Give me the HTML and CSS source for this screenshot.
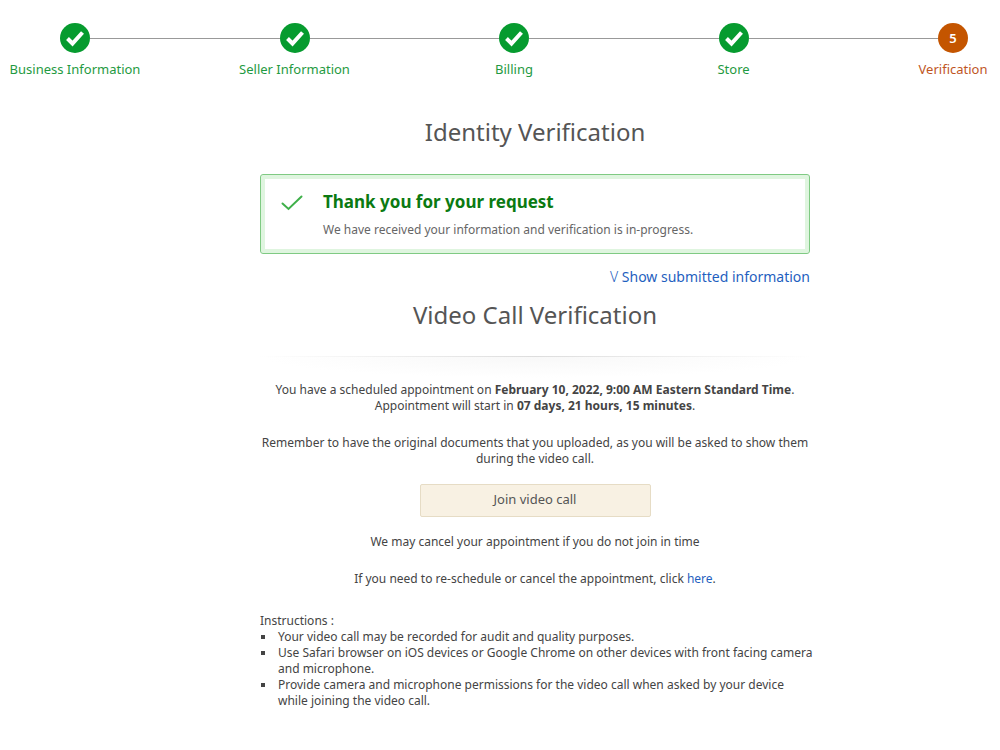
FILE: index.html
```html
<!DOCTYPE html>
<html lang="en">

<head>
    <title>Identity Verification</title>
    <meta charset="UTF-8">
    <meta name="viewport" content="width=device-width, initial-scale=1.0">
    <link rel="stylesheet" href="styles.css">
</head>

<body>
    <ol class="steps">
        <li class="step done">
            <svg class="step-icon" viewBox="0 0 30 30" aria-hidden="true">
                <circle cx="15" cy="15" r="15" />
                <path d="M7.5 15.5 L12.5 20.5 L22.5 9.5" />
            </svg>
            <span class="step-label">Business Information</span>
        </li>
        <li class="step-line" aria-hidden="true"></li>
        <li class="step done">
            <svg class="step-icon" viewBox="0 0 30 30" aria-hidden="true">
                <circle cx="15" cy="15" r="15" />
                <path d="M7.5 15.5 L12.5 20.5 L22.5 9.5" />
            </svg>
            <span class="step-label">Seller Information</span>
        </li>
        <li class="step-line" aria-hidden="true"></li>
        <li class="step done">
            <svg class="step-icon" viewBox="0 0 30 30" aria-hidden="true">
                <circle cx="15" cy="15" r="15" />
                <path d="M7.5 15.5 L12.5 20.5 L22.5 9.5" />
            </svg>
            <span class="step-label">Billing</span>
        </li>
        <li class="step-line" aria-hidden="true"></li>
        <li class="step done">
            <svg class="step-icon" viewBox="0 0 30 30" aria-hidden="true">
                <circle cx="15" cy="15" r="15" />
                <path d="M7.5 15.5 L12.5 20.5 L22.5 9.5" />
            </svg>
            <span class="step-label">Store</span>
        </li>
        <li class="step-line" aria-hidden="true"></li>
        <li class="step current" aria-current="step">
            <span class="step-number">5</span>
            <span class="step-label">Verification</span>
        </li>
    </ol>

    <main class="content">
        <h1 class="title">Identity Verification</h1>

        <div class="alert" role="status">
            <svg class="alert-icon" viewBox="0 0 22 16" aria-hidden="true">
                <path d="M1.5 8.5 L7.5 14 L20.5 1.5" />
            </svg>
            <div class="alert-body">
                <h2 class="alert-title">Thank you for your request</h2>
                <p class="alert-text">We have received your information and verification is in-progress.</p>
            </div>
        </div>

        <a class="show-info" href="#"><span class="chevron">V</span> Show submitted information</a>

        <h1 class="title">Video Call Verification</h1>
        <div class="divider"></div>

        <div class="appointment">
            <p>You have a scheduled appointment on <b>February 10, 2022, 9:00 AM Eastern Standard Time</b>.<br>
                Appointment will start in <b>07 days, 21 hours, 15 minutes</b>.</p>
            <p>Remember to have the original documents that you uploaded, as you will be asked to show them
                during the video call.</p>
            <button type="button" class="join-button">Join video call</button>
            <p>We may cancel your appointment if you do not join in time</p>
            <p>If you need to re-schedule or cancel the appointment, click <a href="#">here</a>.</p>
        </div>

        <div class="instructions">
            <p>Instructions :</p>
            <ul>
                <li>Your video call may be recorded for audit and quality purposes.</li>
                <li>Use Safari browser on iOS devices or Google Chrome on other devices with front facing camera<br>
                    and microphone.</li>
                <li>Provide camera and microphone permissions for the video call when asked by your device<br>
                    while joining the video call.</li>
            </ul>
        </div>
    </main>
</body>

</html>
```
FILE: styles.css
```css
* {
    box-sizing: border-box;
}

body {
    margin: 0;
    font-family: "Noto Sans", "Open Sans", sans-serif;
    font-size: 12px;
    line-height: 16px;
    color: #444;
    background-color: #fff;
}

p,
h1,
h2,
ul,
ol {
    margin: 0;
    padding: 0;
}

a {
    color: #1f5fc0;
    text-decoration: none;
}

a:hover {
    text-decoration: underline;
}

/* progress bar */
.steps {
    display: flex;
    list-style: none;
    padding: 23px 32px 0 60px;
}

.step {
    display: flex;
    flex-direction: column;
    align-items: center;
    gap: 8px;
    width: 30px;
    font-size: 13px;
    white-space: nowrap;
}

.step-line {
    flex: 1;
    height: 1px;
    margin-top: 15px;
    background-color: #999;
}

.step-icon,
.step-number {
    flex: none;
    width: 30px;
    height: 30px;
}

.step-icon circle {
    fill: #069b2f;
}

.step-icon path {
    fill: none;
    stroke: #fff;
    stroke-width: 4;
}

.step-number {
    border-radius: 50%;
    background-color: #c45500;
    color: #fff;
    font-weight: 600;
    line-height: 30px;
    text-align: center;
}

.done {
    color: #1f9a42;
}

.current {
    color: #c0561f;
}

/* main column */
.content {
    display: flex;
    flex-direction: column;
    margin: 39px 19% 0 26%;
}

.title {
    font-size: 24px;
    font-weight: 400;
    line-height: 32px;
    text-align: center;
    color: #555;
}

.alert {
    display: flex;
    gap: 20px;
    margin-top: 26px;
    padding: 14px 16px 15px;
    border: 1px solid #7fca83;
    border-radius: 3px;
    box-shadow: inset 0 0 0 4px #dff5df;
}

.alert-icon {
    flex: none;
    width: 22px;
    height: 16px;
    margin: 6px 0 0 4px;
    fill: none;
    stroke: #3fb04a;
    stroke-width: 2;
    stroke-linecap: round;
}

.alert-title {
    font-size: 17px;
    font-weight: 700;
    line-height: 26px;
    color: #0b7a12;
}

.alert-text {
    margin-top: 7px;
    color: #666;
}

.show-info {
    align-self: flex-end;
    margin: 13px 0 12px;
    font-size: 14px;
    line-height: 20px;
}

.chevron {
    font-weight: 300;
}

.divider {
    height: 22px;
    margin-top: 25px;
    background: radial-gradient(ellipse at top, #f8f8f8, #fff 70%);
    border-top: 1px solid;
    border-image: linear-gradient(to right, #fff, #ddd 50%, #fff) 1;
}

.appointment {
    display: flex;
    flex-direction: column;
    align-items: center;
    gap: 21px;
    margin-top: 4px;
    text-align: center;
}

.join-button {
    width: 42%;
    height: 33px;
    margin: -4px 0;
    padding: 0 0 4px;
    border: 1px solid #e6dcc5;
    border-radius: 2px;
    background-color: #f8f1e3;
    color: #555;
    font-family: inherit;
    font-size: 13px;
}

.instructions {
    margin-top: 26px;
}

/* long items may run slightly past the column */
.instructions ul {
    margin-right: -10px;
    padding-left: 16px;
    list-style: square;
}

.instructions li {
    padding-left: 2px;
}
```
